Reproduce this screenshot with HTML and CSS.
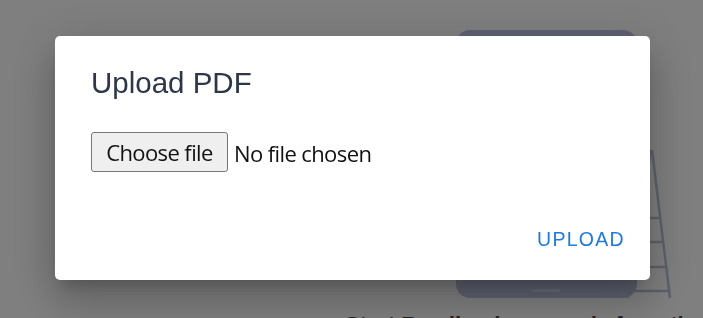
FILE: index.html
```html
<!DOCTYPE html>
<html>
<head>
<meta charset="utf-8">
<link rel="stylesheet" href="styles.css">
</head>
<body>
<div class="page">
  <svg class="art" width="703" height="318" viewBox="0 0 703 318">
    <rect x="456" y="30" width="181" height="268" rx="14" fill="#bcc4e2"/>
    <rect x="532" y="289" width="28" height="3" rx="1.5" fill="#d6dcef"/>
    <g stroke="#bcc3d8" stroke-width="2.5" fill="none">
      <line x1="651" y1="150" x2="628" y2="298"/>
      <line x1="652" y1="150" x2="670" y2="298"/>
      <line x1="640" y1="218" x2="660" y2="218"/>
      <line x1="638" y1="242" x2="663" y2="242"/>
      <line x1="635" y1="267" x2="666" y2="267"/>
      <line x1="632" y1="291" x2="669" y2="291"/>
    </g>
  </svg>
  <p class="tagline">Start Reading in seconds from the</p>
</div>
<div class="overlay">
  <div class="dialog">
    <h2 class="title">Upload PDF</h2>
    <div class="content">
      <label class="file">
        <span class="file-btn">Choose file</span>
        <span class="file-name">No file chosen</span>
      </label>
    </div>
    <div class="actions">
      <button class="upload" type="button">Upload</button>
    </div>
  </div>
</div>
</body>
</html>
```
FILE: styles.css
```css
html, body {
  margin: 0;
  padding: 0;
  width: 703px;
  height: 318px;
  overflow: hidden;
  background: #ffffff;
}

.page {
  position: relative;
  width: 703px;
  height: 318px;
  overflow: hidden;
}

.art {
  position: absolute;
  left: 0;
  top: 0;
}

.tagline {
  position: absolute;
  left: 345px;
  top: 313px;
  margin: 0;
  white-space: nowrap;
  font-family: "Liberation Sans", Arial, sans-serif;
  font-weight: 700;
  font-size: 22px;
  line-height: 24px;
  color: #444444;
}

.overlay {
  position: fixed;
  inset: 0;
  background: rgba(0, 0, 0, 0.5);
  display: flex;
  align-items: center;
  justify-content: center;
}

.dialog {
  width: 595px;
  height: 244px;
  box-sizing: border-box;
  background: #ffffff;
  border-radius: 5px;
  box-shadow: 0 11px 15px -7px rgba(0, 0, 0, 0.2),
              0 24px 38px 3px rgba(0, 0, 0, 0.14),
              0 9px 46px 8px rgba(0, 0, 0, 0.12);
  display: flex;
  flex-direction: column;
  padding: 0 25px 0 36px;
  margin-left: 2px;
  margin-top: -2px;
}

.title {
  margin: 29px 0 0 0;
  font-family: "Liberation Sans", Arial, sans-serif;
  font-weight: 400;
  font-size: 29.5px;
  line-height: 36px;
  color: #2d3748;
}

.content {
  margin-top: 31px;
}

.file {
  display: inline-flex;
  align-items: center;
  gap: 6px;
  font-family: "Open Sans", sans-serif;
  font-size: 22px;
  letter-spacing: -0.6px;
  color: #111111;
}

.file-btn {
  box-sizing: border-box;
  display: inline-flex;
  align-items: center;
  justify-content: center;
  width: 137px;
  height: 40px;
  background: #efefef;
  border: 1px solid #767676;
  border-radius: 3px;
}

.file-name {
  padding-top: 2px;
}

.actions {
  margin-top: auto;
  margin-bottom: 29px;
  display: flex;
  justify-content: flex-end;
}

.upload {
  background: none;
  border: 0;
  padding: 0;
  font-family: "Liberation Sans", Arial, sans-serif;
  font-size: 19.5px;
  letter-spacing: 1.3px;
  text-transform: uppercase;
  color: #1f7ad8;
  cursor: pointer;
}
```
